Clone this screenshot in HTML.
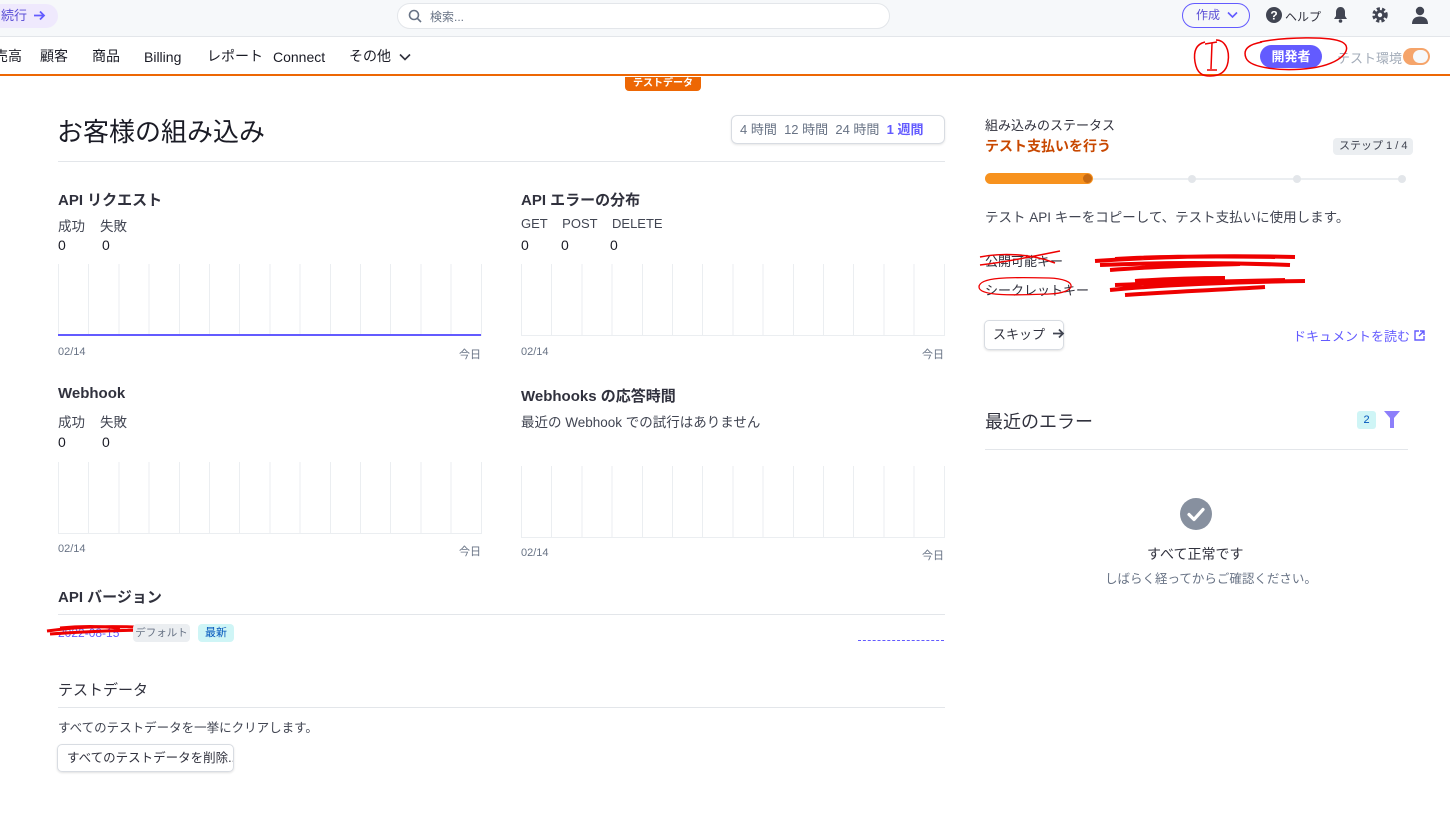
<!DOCTYPE html>
<html><head><meta charset="utf-8"><style>
*{box-sizing:border-box;margin:0;padding:0}
body{width:1450px;height:824px;position:relative;overflow:hidden;background:#fff;font-family:"Liberation Sans","Noto Sans CJK JP",sans-serif;color:#30313d}
.a{position:absolute;white-space:nowrap}
.top{position:absolute;left:0;top:0;width:1450px;height:37px;background:#f6f8fa;border-bottom:1px solid #e3e6ea}
.nav{position:absolute;left:0;top:37px;width:1450px;height:39px;border-bottom:2px solid #ed6704}
.nav span{position:absolute;top:9px;font-size:14px;line-height:20px;height:20px;color:#1a1b25}
.h2{font-size:15px;font-weight:bold;color:#30313d}
.lbl{font-size:13.5px;color:#414552}
.num{font-size:14px;color:#1a1b25}
.chart{position:absolute;height:72px;background:repeating-linear-gradient(90deg,#ebeef1 0 1px,transparent 1px 30.2px)}
.small{font-size:11px;color:#687385}
.hr{position:absolute;height:1px;background:#e3e6ea}
</style></head><body>
<div class="top">
 <div class="a" style="left:-10px;top:4px;height:24px;width:68px;border-radius:12px;background:#efe9fd;color:#5b4fd6;font-size:13px;padding:0 0 0 11px;line-height:24px">続行 <svg width="13" height="11" viewBox="0 0 13 11" style="vertical-align:-1px;margin-left:2px"><path d="M1 5.5h10M7 1.5l4 4-4 4" fill="none" stroke="#635bff" stroke-width="1.8"/></svg></div>
 <div class="a" style="left:397px;top:3px;width:493px;height:26px;border:1px solid #e3e6ea;border-radius:13px;background:#fff"></div>
 <svg class="a" style="left:408px;top:9px" width="14" height="14" viewBox="0 0 14 14"><circle cx="6" cy="6" r="4.5" fill="none" stroke="#687385" stroke-width="1.6"/><path d="M9.3 9.3L13 13" stroke="#687385" stroke-width="1.6"/></svg>
 <div class="a" style="left:430px;top:8px;font-size:12px;color:#687385">検索...</div>
 <div class="a" style="left:1182px;top:3px;width:68px;height:25px;border:1px solid #635bff;border-radius:13px;color:#5b4fd6;font-size:12px;padding:0 0 0 13px;line-height:23px">作成 <svg width="11" height="8" viewBox="0 0 11 8" style="margin-left:4px"><path d="M1 1.5l4.5 4.5 4.5-4.5" fill="none" stroke="#635bff" stroke-width="1.6"/></svg></div>
 <svg class="a" style="left:1266px;top:7px" width="16" height="16" viewBox="0 0 16 16"><circle cx="8" cy="8" r="8" fill="#414552"/><text x="8" y="12.5" font-size="12" font-weight="bold" fill="#fff" text-anchor="middle" font-family="Liberation Sans">?</text></svg>
 <div class="a" style="left:1285px;top:8px;font-size:12px;color:#30313d">ヘルプ</div>
 <svg class="a" style="left:1333px;top:6px" width="15" height="17" viewBox="0 0 15 17"><path d="M7.5 1C4.5 1 3 3.5 3 6v4L1 13h13l-2-3V6c0-2.5-1.5-5-4.5-5z" fill="#414552"/><circle cx="7.5" cy="15" r="1.8" fill="#414552"/></svg>
 <svg class="a" style="left:1371px;top:6px" width="18" height="18" viewBox="0 0 18 18"><circle cx="9" cy="9" r="6" fill="none" stroke="#414552" stroke-width="3.5" stroke-dasharray="3 2"/><circle cx="9" cy="9" r="5" fill="#414552"/><circle cx="9" cy="9" r="2.2" fill="#f6f8fa"/></svg>
 <svg class="a" style="left:1411px;top:6px" width="18" height="18" viewBox="0 0 18 18"><circle cx="9" cy="5" r="4.2" fill="#414552"/><path d="M1 18c0-5 3-7.5 8-7.5s8 2.5 8 7.5z" fill="#414552"/></svg>
</div>
<div class="nav">
 <span style="left:-6px">売高</span><span style="left:40px">顧客</span><span style="left:92px">商品</span><span style="left:144px;top:10px">Billing</span><span style="left:207px">レポート</span><span style="left:273px;top:10px">Connect</span><span style="left:349px">その他 <svg width="12" height="8" viewBox="0 0 12 8" style="margin-left:4px"><path d="M1 1.5l5 5 5-5" fill="none" stroke="#30313d" stroke-width="1.6"/></svg></span>
 <div class="a" style="left:1260px;top:8px;width:62px;height:23px;border-radius:12px;background:#635bff;color:#fff;font-size:13px;font-weight:bold;text-align:center;line-height:23px">開発者</div>
 <div class="a" style="left:1337px;top:11px;font-size:13px;color:#a3acb9">テスト環境</div>
 <div class="a" style="left:1403px;top:11px;width:27px;height:17px;border-radius:9px;background:#f5a46a"></div>
 <div class="a" style="left:1413px;top:13px;width:15px;height:13px;border-radius:7px;background:#f6f8fa"></div>
</div>
<svg class="a" style="left:1185px;top:30px" width="170" height="55" viewBox="0 0 170 55"><path d="M20 12c-8 2-12 8-10 20s8 14 15 14 16-2 18-14-3-22-12-22" fill="none" stroke="#e00" stroke-width="1.5"/><path d="M20 14l12-2M27 13l-1 26M22 40h10" fill="none" stroke="#e00" stroke-width="1.5"/><path d="M75 12c25-5 70-6 82 0s0 22-30 26-62 0-66-10 5-14 16-16" fill="none" stroke="#e00" stroke-width="1.5"/></svg>
<div class="a" style="left:625px;top:77px;width:76px;height:14px;background:#ed6704;color:#fff;font-size:10px;font-weight:bold;text-align:center;border-radius:0 0 4px 4px;line-height:14px">テストデータ</div>

<div class="a" style="left:57px;top:112px;font-size:26px;color:#1a1b25">お客様の組み込み</div>
<div class="a" style="left:731px;top:115px;width:214px;height:29px;border:1px solid #d8dce2;border-radius:6px;box-shadow:0 1px 2px rgba(0,0,0,.1);font-size:13px;color:#687385;padding:0 0 0 8px;line-height:27px">4 時間&nbsp; 12 時間&nbsp; 24 時間&nbsp; <b style="color:#635bff">1 週間</b></div>
<div class="hr" style="left:58px;top:161px;width:887px"></div>

<div class="a h2" style="left:58px;top:189px">API リクエスト</div>
<div class="a lbl" style="left:58px;top:215px">成功&nbsp;&nbsp;&nbsp; 失敗</div>
<div class="a num" style="left:58px;top:237px">0</div><div class="a num" style="left:102px;top:237px">0</div>
<div class="chart" style="left:58px;top:264px;width:424px"></div>
<div class="a" style="left:58px;top:334px;width:423px;height:2px;background:#635bff"></div>
<div class="a small" style="left:58px;top:346px">02/14</div><div class="a small" style="left:459px;top:346px">今日</div>

<div class="a h2" style="left:521px;top:189px">API エラーの分布</div>
<div class="a lbl" style="left:521px;top:216px;font-size:13px">GET&nbsp;&nbsp;&nbsp; POST&nbsp;&nbsp;&nbsp; DELETE</div>
<div class="a num" style="left:521px;top:237px">0</div><div class="a num" style="left:561px;top:237px">0</div><div class="a num" style="left:610px;top:237px">0</div>
<div class="chart" style="left:521px;top:264px;width:424px"></div>
<div class="hr" style="left:521px;top:335px;width:424px;background:#ebeef1"></div>
<div class="a small" style="left:521px;top:346px">02/14</div><div class="a small" style="left:922px;top:346px">今日</div>

<div class="a h2" style="left:58px;top:385px">Webhook</div>
<div class="a lbl" style="left:58px;top:411px">成功&nbsp;&nbsp;&nbsp; 失敗</div>
<div class="a num" style="left:58px;top:434px">0</div><div class="a num" style="left:102px;top:434px">0</div>
<div class="chart" style="left:58px;top:462px;width:424px"></div>
<div class="hr" style="left:58px;top:533px;width:424px;background:#ebeef1"></div>
<div class="a small" style="left:58px;top:543px">02/14</div><div class="a small" style="left:459px;top:543px">今日</div>

<div class="a h2" style="left:521px;top:385px">Webhooks の応答時間</div>
<div class="a lbl" style="left:521px;top:411px">最近の Webhook での試行はありません</div>
<div class="chart" style="left:521px;top:466px;width:424px"></div>
<div class="hr" style="left:521px;top:537px;width:424px;background:#ebeef1"></div>
<div class="a small" style="left:521px;top:547px">02/14</div><div class="a small" style="left:922px;top:547px">今日</div>

<div class="a h2" style="left:58px;top:586px">API バージョン</div>
<div class="hr" style="left:58px;top:614px;width:887px"></div>
<div class="a" style="left:58px;top:626px;font-size:12px;color:#635bff">2022-08-15</div>
<svg class="a" style="left:45px;top:622px" width="120" height="18"><path d="M2 9c30-4 60-6 110-3M5 12c40-3 80-4 110-4M15 6c20-2 40-2 60 0" stroke="#e00" stroke-width="3" fill="none"/></svg>
<div class="a" style="left:133px;top:624px;width:57px;height:18px;background:#ebeef1;border-radius:4px;font-size:10.5px;color:#687385;text-align:center;line-height:18px">デフォルト</div>
<div class="a" style="left:198px;top:624px;width:36px;height:18px;background:#cff5f6;border-radius:4px;font-size:11px;color:#0055bc;text-align:center;line-height:18px">最新</div>
<div class="a" style="left:858px;top:640px;width:86px;border-top:1px dashed #635bff"></div>

<div class="a h2" style="left:58px;top:679px;font-weight:normal;color:#30313d">テストデータ</div>
<div class="hr" style="left:58px;top:707px;width:887px"></div>
<div class="a lbl" style="left:58px;top:717px;font-size:12.5px">すべてのテストデータを一挙にクリアします。</div>
<div class="a" style="left:57px;top:744px;width:177px;height:28px;border:1px solid #d8dce2;border-radius:5px;box-shadow:0 1px 2px rgba(0,0,0,.12);font-size:12.5px;color:#30313d;padding:0 0 0 9px;line-height:26px;overflow:hidden">すべてのテストデータを削除...</div>

<div class="a" style="left:985px;top:115px;font-size:13px;color:#30313d">組み込みのステータス</div>
<div class="a" style="left:985px;top:136px;font-size:14px;font-weight:bold;color:#c84801">テスト支払いを行う</div>
<div class="a" style="left:1333px;top:138px;height:17px;padding:0 6px;background:#ebeef1;border-radius:4px;font-size:11px;color:#414552;line-height:17px">ステップ 1 / 4</div>
<div class="a" style="left:985px;top:178px;width:419px;height:2px;background:#ebeef1"></div>
<div class="a" style="left:985px;top:173px;width:108px;height:11px;border-radius:6px;background:#f7921e"></div>
<div class="a" style="left:1083px;top:174px;width:9px;height:9px;border-radius:5px;background:#c76a13"></div>
<div class="a" style="left:1188px;top:175px;width:8px;height:8px;border-radius:4px;background:#e3e6ea"></div>
<div class="a" style="left:1293px;top:175px;width:8px;height:8px;border-radius:4px;background:#e3e6ea"></div>
<div class="a" style="left:1398px;top:175px;width:8px;height:8px;border-radius:4px;background:#e3e6ea"></div>
<div class="a" style="left:985px;top:206px;font-size:13.5px;color:#414552">テスト API キーをコピーして、テスト支払いに使用します。</div>
<div class="a" style="left:985px;top:251px;font-size:13px;color:#30313d">公開可能キー</div>
<div class="a" style="left:985px;top:280px;font-size:13px;color:#30313d">シークレットキー</div>
<svg class="a" style="left:975px;top:245px" width="340" height="60" viewBox="0 0 340 60"><path d="M5 12c20-4 50-4 75 6M5 20c25-3 50-8 80-14" stroke="#e00" stroke-width="1.5" fill="none"/><path d="M120 16c60-4 120-6 200-4M125 20c70-3 140-2 190 0M140 14c50-3 100-3 160-2M135 25c50-4 100-5 130-6" stroke="#e00" stroke-width="4" fill="none"/><path d="M135 45c60-6 130-8 195-9M140 40c70-3 130-4 170-5M150 50c60-4 110-6 140-8M160 36c30-2 60-3 90-3" stroke="#e00" stroke-width="4" fill="none"/><path d="M4 42c0-10 30-10 70-9 30 1 29 15 0 16s-70 3-70-7z" stroke="#e00" stroke-width="1.3" fill="none"/></svg>
<div class="a" style="left:984px;top:320px;width:80px;height:30px;border:1px solid #d8dce2;border-radius:5px;box-shadow:0 1px 2px rgba(0,0,0,.12);font-size:13px;color:#30313d;padding:0 0 0 8px;line-height:28px">スキップ <svg width="13" height="11" viewBox="0 0 13 11" style="margin-left:3px"><path d="M1 5.5h10M7 1.5l4 4-4 4" fill="none" stroke="#414552" stroke-width="1.8"/></svg></div>
<div class="a" style="left:1293px;top:326px;font-size:13px;color:#635bff">ドキュメントを読む <svg width="11" height="11" viewBox="0 0 11 11"><path d="M5 1H1v9h9V6M6 1h4v4M10 1L5 6" fill="none" stroke="#635bff" stroke-width="1.4"/></svg></div>

<div class="a" style="left:985px;top:408px;font-size:18px;color:#30313d">最近のエラー</div>
<div class="a" style="left:1357px;top:411px;width:19px;height:18px;background:#cff5f6;border-radius:3px;font-size:11px;color:#0055bc;text-align:center;line-height:18px">2</div>
<svg class="a" style="left:1384px;top:411px" width="16" height="17" viewBox="0 0 16 17"><path d="M0 0h16L10 7v10H6V7z" fill="#8d7ffa"/></svg>
<div class="hr" style="left:985px;top:449px;width:423px"></div>
<svg class="a" style="left:1180px;top:498px" width="32" height="32" viewBox="0 0 32 32"><circle cx="16" cy="16" r="16" fill="#87909f"/><path d="M9 16.5l5 5 9-10" fill="none" stroke="#fff" stroke-width="3.2" stroke-linecap="round" stroke-linejoin="round"/></svg>
<div class="a" style="left:1147px;top:544px;font-size:14px;color:#30313d">すべて正常です</div>
<div class="a" style="left:1105px;top:568px;font-size:12.5px;color:#687385">しばらく経ってからご確認ください。</div>
</body></html>
